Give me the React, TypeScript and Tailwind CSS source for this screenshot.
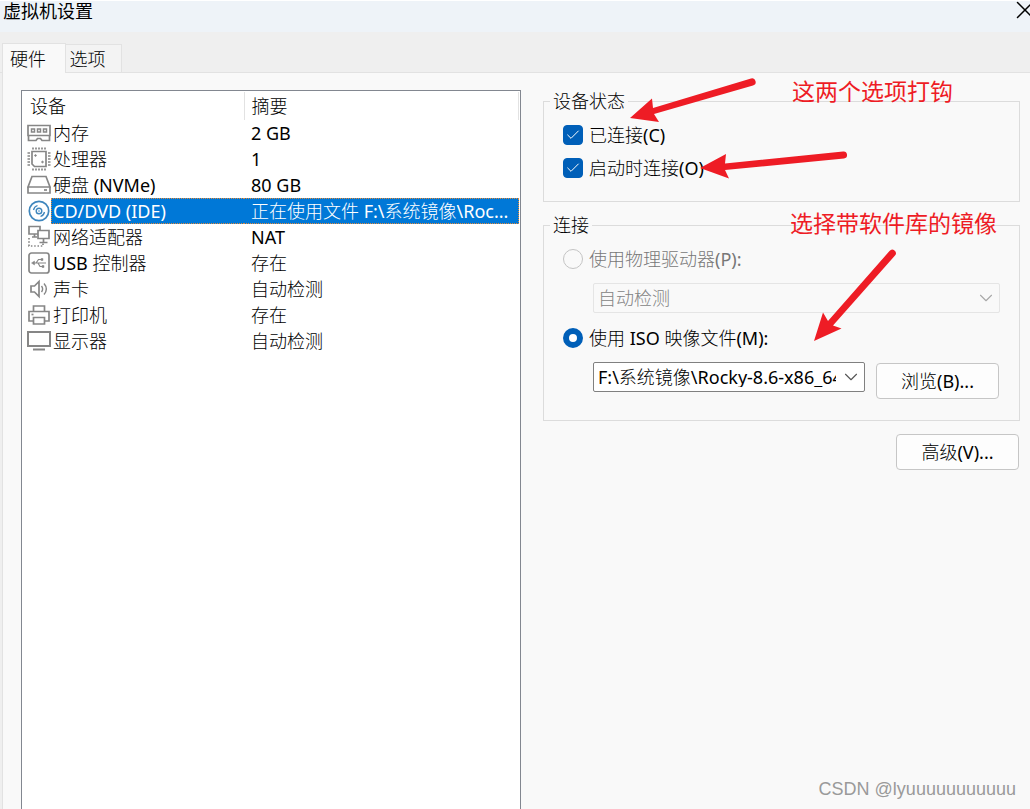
import { useState, type ReactNode } from "react";
import { X, ChevronDown, Check } from "lucide-react";

const iconProps = {
  width: 24,
  height: 24,
  viewBox: "0 0 24 24",
  fill: "none",
  stroke: "#868686",
  strokeWidth: 1.7,
};

const MemoryIcon = () => (
  <svg {...iconProps}>
    <path d="M1 4.500h22v10H1zM1.500 14.500v5h7.500l1.500-2h3l1.500 2h7.500v-5" />
    <path d="M4.500 8h3v3h-3zM10.500 8h3v3h-3zM16.500 8h3v3h-3z" strokeWidth="1.500" />
  </svg>
);

const CpuIcon = () => (
  <svg {...iconProps}>
    <path d="M5 4.500h14v15H7.500L5 17z" />
    <path d="M6 .500v2M9 .500v2M12 .500v2M15 .500v2M18 .500v2M6 21.500v2M9 21.500v2M12 21.500v2M15 21.500v2M18 21.500v2" />
    <path d="M.500 6H3M.500 9H3M.500 12H3M.500 15H3M.500 18H3M21 6h2.500M21 9h2.500M21 12h2.500M21 15h2.500M21 18h2.500" />
    <circle cx="8.500" cy="8.500" r=".800" fill="#868686" strokeWidth="1" />
    <circle cx="15.500" cy="15" r=".800" fill="#868686" strokeWidth="1" />
  </svg>
);

const DiskIcon = () => (
  <svg {...iconProps}>
    <path d="M5 3.500h14L23 14H1zM1 14h22v6H1z" />
    <path d="M17 17h3" />
  </svg>
);

const DiscIcon = () => (
  <svg {...iconProps} stroke="#3f86bd">
    <circle cx="12" cy="12" r="9.700" />
    <circle cx="12" cy="12" r="2.800" strokeWidth="1.400" />
    <circle cx="12" cy="12" r=".500" fill="#3f86bd" strokeWidth=".500" />
    <path d="M6.500 11c.500-2.300 1.700-3.800 4-4.500M17.500 13c-.500 2.300-1.700 3.800-4 4.500" strokeWidth="1.300" />
  </svg>
);

const NetworkIcon = () => (
  <svg {...iconProps}>
    <path d="M10.500 9H2V1.500h11V5M5 12h5M7.500 9v3M11 5.500h11v8H11zM16.500 13.500V17M12.500 17.500h8" />
    <path d="M2 13v8h14v-3" strokeDasharray="1.500 1.800" />
  </svg>
);

const UsbIcon = () => (
  <svg {...iconProps}>
    <rect x="2" y="2" width="20" height="20" rx="2.500" />
    <path d="M6 12h13M9 12l2.500-3.500H14M11 12l2 3.500h2" strokeWidth="1.200" />
    <path d="M7.500 10L4.500 12l3 2zM14 7.500h2v2h-2zM15 14.500h2v2h-2z" fill="#868686" strokeWidth=".500" />
  </svg>
);

const SoundIcon = () => (
  <svg {...iconProps}>
    <path d="M4 9h3.500L12 4.500v15L7.500 15H4z" />
    <path d="M14.500 9c1.500 2 1.500 4 0 6M17 6.500c3 3.500 3 7.500 0 11" strokeWidth="1.400" />
  </svg>
);

const PrinterIcon = () => (
  <svg {...iconProps}>
    <path d="M6.500 8V3h11v5M6.500 18H2V8.500h20V18h-4.500M6.500 14.500h11V21h-11z" />
    <path d="M4.500 11.500h2" />
  </svg>
);

const MonitorIcon = () => (
  <svg {...iconProps} strokeWidth="2">
    <path d="M1 3h22v14H1zM6 20.500h12" />
  </svg>
);

const devices: { icon: ReactNode; name: string; summary: string }[] = [
  { icon: <MemoryIcon />, name: "内存", summary: "2 GB" },
  { icon: <CpuIcon />, name: "处理器", summary: "1" },
  { icon: <DiskIcon />, name: "硬盘 (NVMe)", summary: "80 GB" },
  { icon: <DiscIcon />, name: "CD/DVD (IDE)", summary: "正在使用文件 F:\\系统镜像\\Roc..." },
  { icon: <NetworkIcon />, name: "网络适配器", summary: "NAT" },
  { icon: <UsbIcon />, name: "USB 控制器", summary: "存在" },
  { icon: <SoundIcon />, name: "声卡", summary: "自动检测" },
  { icon: <PrinterIcon />, name: "打印机", summary: "存在" },
  { icon: <MonitorIcon />, name: "显示器", summary: "自动检测" },
];

function DeviceTable() {
  const [selected, setSelected] = useState(3);

  return (
    <table className="w-full table-fixed border-collapse text-left">
      <thead>
        <tr className="h-7">
          <th className="w-[222px] border-r border-[#e2e2e2] pl-2 font-normal">设备</th>
          <th className="border-r border-[#e2e2e2] pl-[7px] font-normal">摘要</th>
        </tr>
      </thead>
      <tbody>
        {devices.map((d, i) => {
          const active = i === selected;
          return (
            <tr key={d.name} className="h-[26px] leading-6" onClick={() => setSelected(i)}>
              <td className="p-0">
                <div className="flex h-[26px] items-center">
                  <span className="w-[29px] shrink-0 pl-[5px]">{d.icon}</span>
                  <span
                    className={
                      active
                        ? "flex-1 border-y border-l border-dotted border-[#e08a3c] bg-[#0078d7] pl-px text-white"
                        : "flex-1 pl-[2px]"
                    }
                  >
                    {d.name}
                  </span>
                </div>
              </td>
              <td className="p-0">
                <div
                  className={
                    active
                      ? "truncate border-y border-r border-dotted border-[#e08a3c] bg-[#0078d7] pl-[7px] text-white"
                      : "truncate pl-[7px]"
                  }
                >
                  {d.summary}
                </div>
              </td>
            </tr>
          );
        })}
      </tbody>
    </table>
  );
}

function CheckRow({ label }: { label: string }) {
  return (
    <label className="flex h-[33px] items-center gap-[6px]">
      <span className="relative flex size-5">
        <input
          type="checkbox"
          defaultChecked
          className="peer size-5 appearance-none rounded-sm border border-gray-500 checked:border-[#005fb8] checked:bg-[#005fb8]"
        />
        <Check
          className="pointer-events-none absolute top-[2px] left-[2px] hidden text-white peer-checked:block"
          size={16}
          strokeWidth={1.5}
        />
      </span>
      {label}
    </label>
  );
}

export default function App() {
  return (
    <main className="relative flex h-screen flex-col overflow-hidden bg-[#efefef] font-['Noto_Sans','Noto_Sans_CJK_SC_Light','Noto_Sans_CJK_SC',sans-serif] text-lg leading-5 text-black">
      {/* Title bar */}
      <header className="flex h-8 shrink-0 items-start justify-between bg-[#eef3f8] pl-[3px] shadow-[inset_0_1px_0_white]">
        <h1 className="font-['Noto_Sans_CJK_SC',sans-serif] text-lg leading-5 font-normal">虚拟机设置</h1>
        <button type="button" aria-label="关闭" className="-mt-[5px] -mr-[10px]">
          <X size={30} strokeWidth={1.2} />
        </button>
      </header>

      {/* Tabs */}
      <div role="tablist" className="flex h-[41px] shrink-0 items-end border-b border-[#e2e2e2] pl-[2px]">
        <button
          type="button"
          role="tab"
          aria-selected="true"
          className="-mb-px h-[30px] w-16 border border-b-0 border-[#e2e2e2] bg-[#f9f9f9] pr-3"
        >
          硬件
        </button>
        <button
          type="button"
          role="tab"
          aria-selected="false"
          className="h-7 w-14 border border-b-0 border-l-0 border-[#e2e2e2] bg-[#f3f3f3] pr-3"
        >
          选项
        </button>
      </div>

      <div className="ml-[2px] flex min-h-0 flex-1 border-l border-[#e2e2e2] bg-[#f9f9f9] pt-[17px] pr-[10px] pl-[18px]">
        {/* Device list */}
        <section className="w-[500px] shrink-0 border border-b-0 border-[#828790] bg-white pt-px pr-px">
          <DeviceTable />
        </section>

        {/* Device settings */}
        <section className="relative ml-[22px] min-w-0 flex-1 pt-px">
          <fieldset className="h-[111px] border border-[#dcdcdc] pt-[7px] pl-[19px]">
            <legend className="-ml-[13px] px-[3px]">设备状态</legend>
            <CheckRow label="已连接(C)" />
            <CheckRow label="启动时连接(O)" />
          </fieldset>

          <fieldset className="mt-[13px] border border-[#dcdcdc] px-[19px] pb-[21px]">
            <legend className="-ml-[13px] px-[3px]">连接</legend>
            <label className="mt-[14px] flex h-5 items-center gap-[6px] text-[#777777]">
              <input
                type="radio"
                name="source"
                disabled
                className="size-5 appearance-none rounded-full border border-[#c4c4c4]"
              />
              使用物理驱动器(P):
            </label>
            <div className="relative mt-[14px] ml-[30px]">
              <select
                disabled
                aria-label="物理驱动器"
                className="h-[30px] w-full appearance-none rounded-xs border border-[#e5e5e5] pl-1 text-[#838383] opacity-100"
              >
                <option>自动检测</option>
              </select>
              <ChevronDown
                className="pointer-events-none absolute top-1 right-[3px] text-[#a8a8a8]"
                size={22}
                strokeWidth={1.2}
              />
            </div>
            <label className="mt-[15px] flex h-5 items-center gap-[6px]">
              <input
                type="radio"
                name="source"
                defaultChecked
                className="size-5 appearance-none rounded-full border border-gray-500 checked:border-[6px] checked:border-[#005fb8] checked:bg-white"
              />
              使用 ISO 映像文件(M):
            </label>
            <div className="mt-[14px] mr-px ml-[30px] flex gap-[11px]">
              <div className="relative min-w-0 flex-1">
                <select
                  aria-label="ISO 映像文件"
                  className="h-[30px] w-full appearance-none rounded-xs border border-[#808080] bg-white pr-7 pl-1"
                >
                  <option>F:\系统镜像\Rocky-8.6-x86_64-dvd.iso</option>
                </select>
                <ChevronDown
                  className="pointer-events-none absolute top-1 right-[3px] text-[#555555]"
                  size={22}
                  strokeWidth={1.2}
                />
              </div>
              <button
                type="button"
                className="mt-px h-9 w-[123px] shrink-0 rounded-sm border border-[#c6c6c6] bg-[#fdfdfd]"
              >
                浏览(B)...
              </button>
            </div>
          </fieldset>

          <div className="mt-[13px] mr-px flex justify-end">
            <button type="button" className="h-9 w-[123px] rounded-sm border border-[#c6c6c6] bg-[#fdfdfd]">
              高级(V)...
            </button>
          </div>

          {/* Red notes and arrows */}
          <p className="absolute -top-3 left-[249px] font-['Noto_Sans_CJK_SC',sans-serif] text-[23px] leading-6 whitespace-nowrap text-[#ee1c25]">
            这两个选项打钩
          </p>
          <p className="absolute top-[120px] left-[247px] font-['Noto_Sans_CJK_SC',sans-serif] text-[23px] leading-6 whitespace-nowrap text-[#ee1c25]">
            选择带软件库的镜像
          </p>
          <svg
            className="pointer-events-none absolute -top-4 left-20"
            width="240"
            height="280"
            viewBox="623 74 240 280"
            fill="#ee1c25"
          >
            <path d="M630 118L652 98.500 653 108 751 78.500A3.500 3.500 0 0 1 753 85.500L654 114 659 122z" />
            <path d="M700 168L726 154 725 163.500 843 151.500A3.500 3.500 0 0 1 844 158.500L725 170 729 178.500z" />
          </svg>
          <svg
            className="pointer-events-none absolute top-[150px] left-[260px]"
            width="100"
            height="110"
            viewBox="803 240 100 110"
            fill="#ee1c25"
          >
            <path d="M814 341L823 312.500 828 321 889.500 251A3.500 3.500 0 0 1 895 255.500L833 325.500 841.500 328.500z" />
          </svg>
        </section>
      </div>

      <p className="absolute right-[14px] bottom-2 font-['Liberation_Sans',sans-serif] text-lg leading-6 text-[#9a9a9a]">
        CSDN @lyuuuuuuuuuuu
      </p>
    </main>
  );
}
